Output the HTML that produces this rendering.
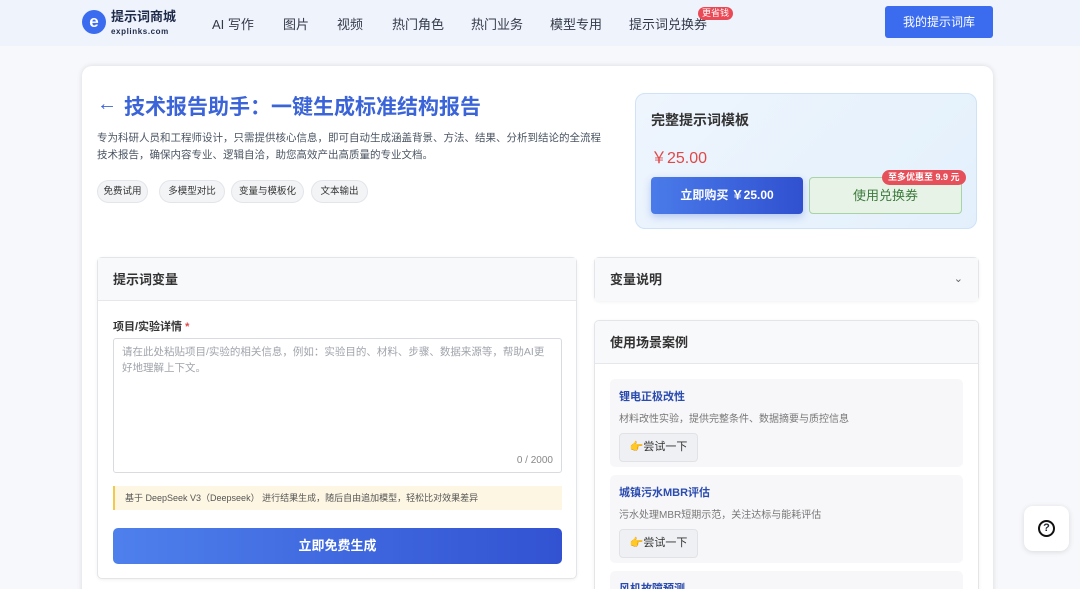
<!DOCTYPE html>
<html><head><meta charset="utf-8"><style>
*{box-sizing:border-box;margin:0;padding:0}
html,body{width:1080px;height:589px;overflow:hidden}
body{background:#f7f8fb;font-family:"Liberation Sans","Noto Sans CJK SC",sans-serif;color:#1f2937;position:relative}
.hdr{position:absolute;left:0;top:0;width:1080px;height:46px;background:#eff3fb}
.logo{position:absolute;left:82px;top:10px;width:24px;height:24px;border-radius:50%;background:#3b6cf0;color:#fff;font-weight:bold;font-size:17px;text-align:center;line-height:24px}
.lt{position:absolute;left:111px;top:9px;font-size:13px;font-weight:bold;color:#1e2a4a;line-height:15px}
.lt small{display:block;font-size:8px;letter-spacing:.6px;font-weight:bold}
.nav{position:absolute;top:14px;font-size:13px;color:#333a4a}
.tag{position:absolute;left:698px;top:7px;background:#e94a55;color:#fff;font-size:9px;padding:1px 4px;border-radius:7px;line-height:11px}
.mybtn{position:absolute;left:885px;top:6px;width:108px;height:32px;background:#3b6cf0;color:#fff;font-size:12px;text-align:center;line-height:32px;border-radius:3px}
.main{position:absolute;left:82px;top:66px;width:911px;height:540px;background:#fff;border-radius:10px;box-shadow:0 0 6px rgba(0,0,0,.12)}
h1{position:absolute;left:124px;top:91px;font-size:21px;color:#3b64d8;font-weight:bold}
.arrow{position:absolute;left:97px;top:93px;font-size:20px;color:#3b64d8}
.desc{position:absolute;left:97px;top:130px;width:512px;font-size:10.5px;color:#4b5563;line-height:17px}
.chip{position:absolute;top:180px;height:23px;border:1px solid #e2e5ea;border-radius:12px;background:#f3f4f6;font-size:9.5px;line-height:21px;color:#333;text-align:center}
.price{position:absolute;left:635px;top:93px;width:342px;height:136px;border:1px solid #cfe2f8;border-radius:10px;background:linear-gradient(135deg,#eef5fd,#e3f0fc)}
.card{position:absolute;background:#fff;border:1px solid #e3e5e9;border-radius:5px;box-shadow:0 1px 3px rgba(0,0,0,.06)}
.ch{height:43px;border-bottom:1px solid #e5e7eb;background:#f8f9fb;padding:0 15px;line-height:43px;font-size:13px;font-weight:bold;color:#333}
.case{position:absolute;left:15px;width:353px;background:#f7f7f9;border-radius:5px;padding:9px 9px}
.case b{display:block;font-size:11px;color:#2a4bb0}
.case p{font-size:10px;color:#777;margin-top:6px}
.try{margin-top:8px;width:79px;height:29px;border:1px solid #e0e2e6;border-radius:4px;background:#eff0f3;font-size:11px;line-height:27px;text-align:center;color:#333}
</style></head><body>
<div class="hdr"></div>
<div class="logo">e</div>
<div class="lt">提示词商城<small>explinks.com</small></div>
<div class="nav" style="left:212px">AI 写作</div>
<div class="nav" style="left:283px">图片</div>
<div class="nav" style="left:337px">视频</div>
<div class="nav" style="left:392px">热门角色</div>
<div class="nav" style="left:471px">热门业务</div>
<div class="nav" style="left:550px">模型专用</div>
<div class="nav" style="left:629px">提示词兑换券</div>
<div class="tag">更省钱</div>
<div class="mybtn">我的提示词库</div>
<div class="main"></div>
<div class="arrow">←</div>
<h1>技术报告助手：一键生成标准结构报告</h1>
<div class="desc">专为科研人员和工程师设计，只需提供核心信息，即可自动生成涵盖背景、方法、结果、分析到结论的全流程技术报告，确保内容专业、逻辑自洽，助您高效产出高质量的专业文档。</div>
<div class="chip" style="left:97px;width:51px">免费试用</div>
<div class="chip" style="left:159px;width:66px">多模型对比</div>
<div class="chip" style="left:231px;width:73px">变量与模板化</div>
<div class="chip" style="left:311px;width:57px">文本输出</div>
<div class="price">
 <div style="position:absolute;left:15px;top:16px;font-size:14px;font-weight:bold;color:#333">完整提示词模板</div>
 <div style="position:absolute;left:15px;top:50px;font-size:16px;color:#e04848">￥25.00</div>
 <div style="position:absolute;left:15px;top:83px;width:152px;height:37px;border-radius:4px;background:linear-gradient(90deg,#4a7bea,#3050d0);color:#fff;font-size:12px;font-weight:bold;text-align:center;line-height:37px;box-shadow:0 3px 8px rgba(60,100,220,.3)">立即购买 ￥25.00</div>
 <div style="position:absolute;left:173px;top:83px;width:153px;height:37px;border-radius:4px;border:1px solid #a8d3a4;background:#e6f3e6;color:#3d7a3d;font-size:13px;text-align:center;line-height:35px">使用兑换券</div>
 <div style="position:absolute;left:246px;top:76px;background:#e5505a;color:#fff;font-size:9px;font-weight:bold;padding:1px 6px;border-radius:8px;line-height:13px">至多优惠至 9.9 元</div>
</div>
<div class="card" style="left:97px;top:257px;width:480px;height:322px">
 <div class="ch">提示词变量</div>
 <div style="position:absolute;left:15px;top:60px;font-size:11px;font-weight:bold;color:#333">项目/实验详情 <span style="color:#e04848">*</span></div>
 <div style="position:absolute;left:15px;top:80px;width:449px;height:135px;border:1px solid #d8dbe0;border-radius:3px;padding:5px 8px;font-size:10.5px;color:#a0a4ab;line-height:16px">请在此处粘贴项目/实验的相关信息，例如：实验目的、材料、步骤、数据来源等，帮助AI更好地理解上下文。<div style="position:absolute;right:8px;bottom:3px;font-size:10px;color:#888">0 / 2000</div></div>
 <div style="position:absolute;left:15px;top:228px;width:449px;height:24px;background:#fdf6e3;border-left:2px solid #f2c94c;font-size:9px;color:#555;line-height:24px;padding-left:10px">基于 DeepSeek V3（Deepseek） 进行结果生成，随后自由追加模型，轻松比对效果差异</div>
 <div style="position:absolute;left:15px;top:270px;width:449px;height:36px;border-radius:5px;background:linear-gradient(90deg,#4e80ec,#3252d2);color:#fff;font-size:13px;font-weight:bold;text-align:center;line-height:36px">立即免费生成</div>
</div>
<div class="card" style="left:594px;top:257px;width:385px;height:44px">
 <div class="ch" style="border:none">变量说明<span style="float:right;font-weight:normal;color:#666;font-size:11px">⌄</span></div>
</div>
<div class="card" style="left:594px;top:320px;width:385px;height:280px;overflow:hidden">
 <div class="ch">使用场景案例</div>
 <div class="case" style="top:58px;height:88px"><b>锂电正极改性</b><p>材料改性实验，提供完整条件、数据摘要与质控信息</p><div class="try">👉尝试一下</div></div>
 <div class="case" style="top:154px;height:88px"><b>城镇污水MBR评估</b><p>污水处理MBR短期示范，关注达标与能耗评估</p><div class="try">👉尝试一下</div></div>
 <div class="case" style="top:250px;height:40px"><b>风机故障预测</b></div>
</div>
<div style="position:absolute;left:1024px;top:506px;width:45px;height:45px;background:#fff;border-radius:9px;box-shadow:0 1px 6px rgba(0,0,0,.12)"><div style="position:absolute;left:14px;top:14px;width:17px;height:17px;border:2px solid #111;border-radius:50%;font-size:11px;font-weight:bold;text-align:center;line-height:13px">?</div></div>
</body></html>
